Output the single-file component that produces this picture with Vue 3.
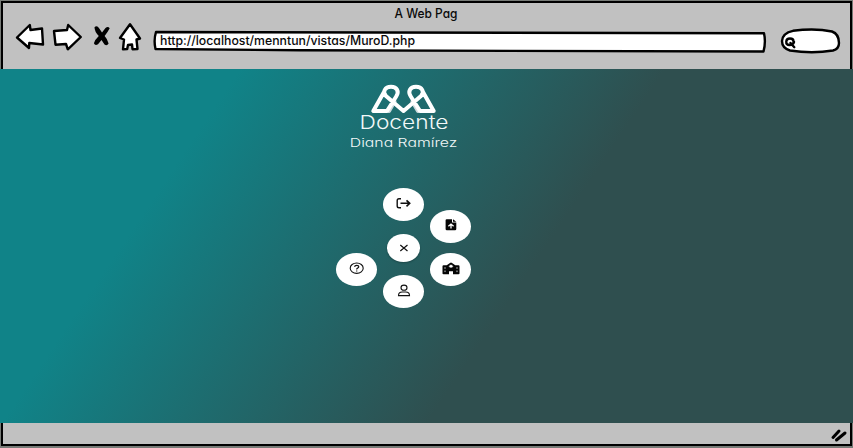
<script setup>
const items = [
  { name: 'logout', col: 2, row: 1 },
  { name: 'upload', col: 3, row: 2 },
  { name: 'close', col: 2, row: 3, small: true },
  { name: 'help', col: 1, row: 4 },
  { name: 'school', col: 3, row: 4 },
  { name: 'person', col: 2, row: 5 },
]
</script>

<template>
  <div class="window">
    <header class="chrome">
      <div class="title">
        <svg width="68" height="19" viewBox="392 3 68 19">
          <text x="394.500" y="18" textLength="63" lengthAdjust="spacingAndGlyphs">A Web Pag</text>
        </svg>
      </div>
      <div class="toolbar">
        <svg class="sketch" width="32" height="34" viewBox="14 22 32 34">
          <path d="M17 37.5L29.8 25L30.5 30L42 28.5L43 44.5L29.3 43L29 48Z" />
        </svg>
        <svg class="sketch forward" width="32" height="34" viewBox="51 22 32 34">
          <path d="M54 31L67 30L68.2 25L80.8 37L67.8 49.3L66 44L55.5 44.7Z" />
        </svg>
        <svg class="cross" width="20" height="34" viewBox="92 22 20 34">
          <path d="M94.500 27.200Q97 25 99.300 28.500L102 32.500L105.500 28Q108 26 109.700 28.300Q107.500 32.500 104.600 36Q107.500 39 108.600 43.500Q107 46.300 104.500 44.500L101.500 40L98 44.300Q95 46 93.900 43.300Q95 39.500 98.800 36Q94.500 31.500 94.500 27.200Z" />
        </svg>
        <svg class="sketch home" width="26" height="34" viewBox="117 22 26 34">
          <path d="M130 24.200L140 38.500L136.500 39.500L137.500 49L132.500 49.200L132 44.500L128 45L127.200 49L123 49.300L124 39.500L120 38Z" />
        </svg>
        <svg class="sketch address" width="616" height="34" viewBox="152 22 616 34">
          <path d="M156 32L764 33.200Q766 42 763.500 51.500L300 50.300L155.500 49Q153.500 40 156 32Z" />
          <text x="160" y="45.300" textLength="255" lengthAdjust="spacingAndGlyphs">http://localhost/menntun/vistas/MuroD.php</text>
        </svg>
        <svg class="sketch search" width="62" height="34" viewBox="780 22 62 34">
          <path d="M782 41Q782.500 33 793 30.800Q815 28 832 31.500Q839 34 839 43Q839 49 833 50.500Q812 54 790 50.500Q782 48 782 41Z" />
          <path d="M794 42Q793 45 789.500 45Q786 45 786.300 41.500Q786.500 38.500 790 38.500Q793.500 38.500 793.500 41.500M790.500 43L794.300 47.200" />
        </svg>
      </div>
    </header>

    <main class="page">
      <svg class="logo" width="68" height="31" viewBox="370 84 68 31">
        <path class="fold" d="M394.500 101.500L389 111M412.500 101.500L418 111" />
        <path d="M384 92L373.300 111H387L396.200 96.500C399.500 91.500 397 86.800 391 86.800C385 86.800 382 92 386 96L403.500 111L421 96C425 92 422 86.800 416 86.800C410 86.800 407.500 91.500 410.800 96.500L420 111H433.700L423 92" />
      </svg>
      <svg class="identity" width="116" height="42" viewBox="346 112 116 42">
        <text class="role" x="359.500" y="128.800" textLength="89" lengthAdjust="spacingAndGlyphs">Docente</text>
        <text class="person" x="349.800" y="147.200" textLength="107.500" lengthAdjust="spacingAndGlyphs">Diana Ramírez</text>
      </svg>
      <nav class="menu">
        <button
          v-for="item in items"
          :key="item.name"
          :class="['bubble', { small: item.small }]"
          :style="{ gridColumn: item.col, gridRow: `${item.row} / span 2` }"
        >
          <svg v-if="item.name === 'logout'" width="16" height="14" viewBox="0.500 0.500 16 14">
            <path d="M5.500 2.200H3.500Q1.700 2.200 1.700 4V9.500Q1.700 11.300 3.500 11.300H5.500" stroke-width="1.400" />
            <path d="M5 6.800H14M11 3.800L14.200 6.800L11 9.800" stroke-width="1.600" />
          </svg>
          <svg v-else-if="item.name === 'upload'" width="16" height="14" viewBox="0 0 16 14">
            <path class="solid" d="M2.600 2.300Q2.600 1.200 3.700 1.200H9V4.500H13.300V11Q13.300 12.200 12 12.200H3.900Q2.600 12.200 2.600 11Z" />
            <path class="solid" d="M10 1.200L13.300 3.700H10Z" />
            <path class="light" d="M8 10.600V6.500M5.400 8.200L8 6L10.600 8.200" />
          </svg>
          <svg v-else-if="item.name === 'close'" width="16" height="14" viewBox="0 0 16 14">
            <path d="M4.300 4L11.500 10M11.500 4L4.300 10" stroke-width="1.200" />
          </svg>
          <svg v-else-if="item.name === 'help'" width="16" height="14" viewBox="0.300 0.300 16 14">
            <ellipse cx="8" cy="6.500" rx="6.500" ry="5.200" />
            <path d="M5.900 5.200Q6 3.700 8 3.700Q10.100 3.700 10.100 5.100Q10.100 5.900 8.900 6.400Q8 6.800 8 7.700M8 8.700V9.700" stroke-width="1.200" />
          </svg>
          <svg v-else-if="item.name === 'school'" width="18" height="14" viewBox="0 0 18 14">
            <path class="solid" d="M.5 4.200Q.5 3.200 1.500 3.200H4.700L8 .9Q9 .3 10 .9L13.300 3.200H16.500Q17.500 3.200 17.500 4.200V11.400Q17.500 12.200 16.500 12.200H11V9.200H7V12.200H1.500Q.5 12.200.5 11.400Z" />
            <ellipse class="clock" cx="9" cy="4.300" rx="2.100" ry="1.800" />
            <path class="window-mark" d="M3 5.200V6.800M3 8.500V10.100M15 5.200V6.800M15 8.500V10.100" />
          </svg>
          <svg v-else width="16" height="14" viewBox="0 0.300 16 14">
            <ellipse cx="8" cy="4" rx="3" ry="2.600" />
            <path d="M2.500 11.900Q2.500 8.300 6.200 8.300H9.800Q13.500 8.300 13.500 11.900Z" />
          </svg>
        </button>
      </nav>
    </main>

    <footer class="status">
      <svg width="20" height="20" viewBox="830 425 20 20">
        <path d="M833 437.500L839 431M836.500 440L845 433" />
      </svg>
    </footer>
  </div>
</template>

<style>
body { margin: 0; }
</style>

<style scoped>
.window {
  width: 853px;
  height: 448px;
  box-sizing: border-box;
  display: grid;
  grid-template-rows: 69px 354px 25px;
  overflow: hidden;
  background: #777b77;
  font-family: Inter, "Liberation Sans", sans-serif;
}
.chrome {
  box-sizing: border-box;
  margin: 1px 1px 0;
  border: solid #000;
  border-width: 2px 2px 0 2px;
  background: #c1c1c1;
}
.title {
  height: 19px;
  padding-left: 389px;
}
svg { display: block; flex: none; overflow: visible; }
text {
  font-feature-settings: "cv11";
  font-weight: 500;
  font-size: 12.500px;
  fill: #0a0a0a;
  stroke: none;
}
.toolbar {
  display: flex;
  padding-left: 11px;
}
.sketch path {
  fill: #fff;
  stroke: #000;
  stroke-width: 2.400;
  stroke-linejoin: round;
  stroke-linecap: round;
}
.forward { margin-left: 5px; }
.cross { margin-left: 9px; }
.cross path { fill: #000; }
.home { margin-left: 5px; }
.address { margin-left: 9px; }
.search { margin-left: 12px; }
.page {
  display: flex;
  flex-direction: column;
  background: linear-gradient(124deg, #108388 22%, #2f4f4f 61%);
}
.logo { margin: 15px 0 0 370px; }
.logo path {
  fill: none;
  stroke: #fff;
  stroke-width: 4;
  stroke-linejoin: round;
  stroke-linecap: round;
}
.logo .fold { stroke: #ccdadd; }
.identity { margin: -3px 0 0 346px; }
.identity text { fill: #f2f8f8; }
.identity .role { font-size: 18.500px; font-weight: 300; }
.identity .person { font-size: 12px; font-weight: 300; }
.menu {
  display: grid;
  grid-template-columns: repeat(3, 47px);
  grid-template-rows: repeat(6, 21.750px);
  place-items: center;
  margin: 28.750px 0 0 333px;
  width: 141px;
}
.bubble {
  box-sizing: border-box;
  width: 41.500px;
  height: 33px;
  padding: 0 0 2px;
  border: 0;
  border-radius: 50%;
  background: #fff;
  display: flex;
  align-items: center;
  justify-content: center;
}
.bubble.small {
  width: 33px;
  height: 27.500px;
  padding: 0;
  box-shadow: 0 1px 2px rgb(0 0 0 / 25%);
}
.bubble svg { fill: none; stroke: #111; stroke-width: 1.100; }
.bubble .solid { fill: #050505; stroke: none; }
.bubble .light { stroke: #fff; stroke-width: 1.300; }
.bubble .clock { fill: #fff; stroke: #050505; stroke-width: .6; }
.bubble .window-mark { stroke: #fff; stroke-width: .8; }
.status {
  box-sizing: border-box;
  margin: 0 1px 2px;
  border: solid #000;
  border-width: 0 2px 2px;
  background: #c1c1c1;
  display: flex;
  justify-content: flex-end;
  padding-top: 2px;
}
.status path { fill: none; stroke: #000; stroke-width: 3; stroke-linecap: round; }
</style>
